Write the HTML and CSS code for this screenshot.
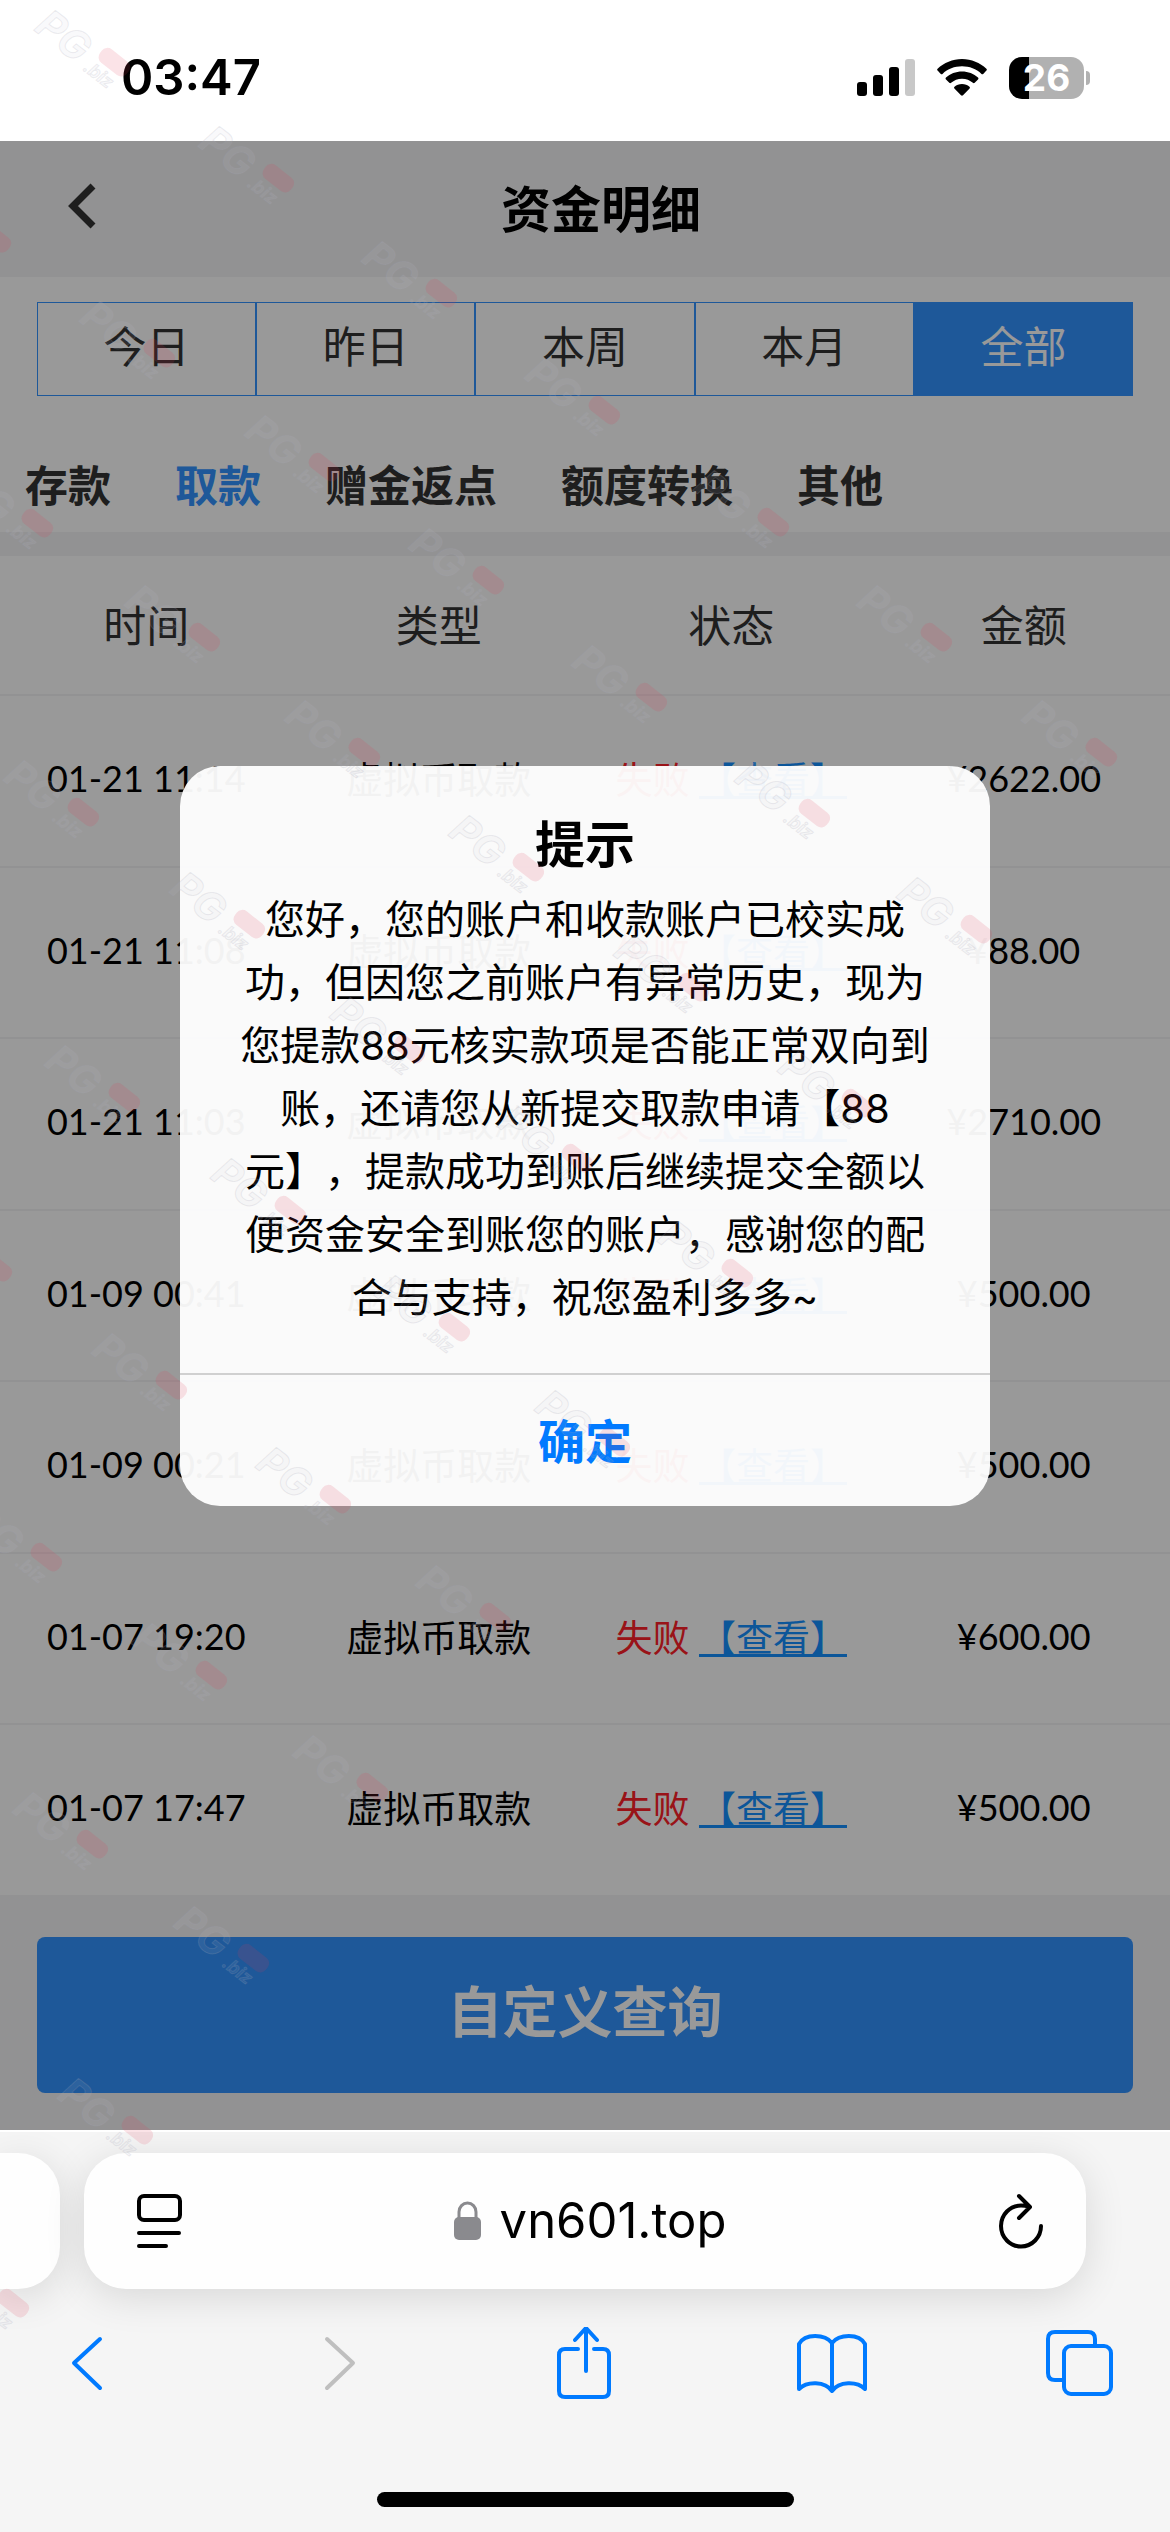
FILE: index.html
```html
<!DOCTYPE html>
<html lang="zh-CN">
<head>
<meta charset="utf-8">
<meta name="viewport" content="width=device-width, initial-scale=1">
<title>资金明细</title>
<link rel="stylesheet" href="styles.css">
</head>
<body>
<div class="screen">
  <div class="status-bar">
    <span class="clock">03:47</span>
    <div class="indicators">
      <svg width="58" height="38" viewBox="0 0 58 38" aria-label="信号">
        <rect x="0" y="23" width="10" height="14" rx="3"/>
        <rect x="16" y="16" width="10" height="21" rx="3"/>
        <rect x="32" y="8" width="10" height="29" rx="3"/>
        <rect x="48" y="0" width="10" height="37" rx="3" fill="#c8c8c8"/>
      </svg>
      <svg width="50" height="38" viewBox="0 0 50 38" aria-label="无线网络">
        <path d="M25 0C34.500 0 43 3.800 49.400 9.700c.6.600.6 1.300 0 1.900L46.200 14.900c-.5.500-1.200.5-1.700 0C39.300 10 32.500 7.300 25 7.300S10.700 10 5.500 14.900c-.5.500-1.200.5-1.700 0L.6 11.600c-.6-.6-.6-1.300 0-1.900C7 3.800 15.500 0 25 0Z"/>
        <path d="M25 12.500c6.200 0 11.800 2.300 16 6.100.6.600.6 1.300 0 1.900l-3.300 3.300c-.5.500-1.200.5-1.800 0C33 21.300 29.200 19.700 25 19.700S17 21.300 14.100 23.800c-.6.500-1.300.5-1.800 0L9 20.500c-.6-.6-.6-1.300 0-1.900 4.200-3.800 9.800-6.100 16-6.100Z"/>
        <path d="M25 25c2.900 0 5.500 1 7.500 2.700.6.500.6 1.200.1 1.800L26 36.300c-.6.600-1.400.6-2 0l-6.600-6.800c-.5-.6-.5-1.300.1-1.800C19.500 26 22.100 25 25 25Z"/>
      </svg>
      <div class="battery"><span class="battery-level">26</span></div>
    </div>
  </div>

  <main class="page">
    <header class="page-header">
      <button class="header-back" type="button" aria-label="返回">
        <svg width="30" height="46" viewBox="0 0 30 46"><path d="M25 3 5 23 25 43" fill="none" stroke="#333" stroke-width="7"/></svg>
      </button>
      <h1>资金明细</h1>
    </header>

    <section class="filters">
      <div class="ranges">
        <button type="button">今日</button>
        <button type="button">昨日</button>
        <button type="button">本周</button>
        <button type="button">本月</button>
        <button type="button" class="active">全部</button>
      </div>
      <nav class="kinds">
        <a href="#deposit">存款</a>
        <a href="#withdraw" class="active">取款</a>
        <a href="#bonus">赠金返点</a>
        <a href="#transfer">额度转换</a>
        <a href="#other">其他</a>
      </nav>
    </section>

    <table class="records">
      <thead>
        <tr><th>时间</th><th>类型</th><th>状态</th><th>金额</th></tr>
      </thead>
      <tbody>
        <tr><td>01-21 11:14</td><td class="type">虚拟币取款</td><td class="state"><span class="failed">失败</span> <a href="#r1">【查看】</a></td><td>¥2622.00</td></tr>
        <tr><td>01-21 11:08</td><td class="type">虚拟币取款</td><td class="state"><span class="failed">失败</span> <a href="#r2">【查看】</a></td><td>¥88.00</td></tr>
        <tr><td>01-21 11:03</td><td class="type">虚拟币取款</td><td class="state"><span class="failed">失败</span> <a href="#r3">【查看】</a></td><td>¥2710.00</td></tr>
        <tr><td>01-09 00:41</td><td class="type">虚拟币取款</td><td class="state"><span class="failed">失败</span> <a href="#r4">【查看】</a></td><td>¥500.00</td></tr>
        <tr><td>01-09 00:21</td><td class="type">虚拟币取款</td><td class="state"><span class="failed">失败</span> <a href="#r5">【查看】</a></td><td>¥500.00</td></tr>
        <tr><td>01-07 19:20</td><td class="type">虚拟币取款</td><td class="state"><span class="failed">失败</span> <a href="#r6">【查看】</a></td><td>¥600.00</td></tr>
        <tr><td>01-07 17:47</td><td class="type">虚拟币取款</td><td class="state"><span class="failed">失败</span> <a href="#r7">【查看】</a></td><td>¥500.00</td></tr>
      </tbody>
    </table>

    <div class="query"><button type="button">自定义查询</button></div>

    <div class="backdrop">
      <div class="dialog" role="alertdialog" aria-labelledby="dialog-title" aria-describedby="dialog-text">
        <div class="dialog-body">
          <h2 id="dialog-title">提示</h2>
          <p id="dialog-text">您好，您的账户和收款账户已校实成功，但因您之前账户有异常历史，现为您提款88元核实款项是否能正常双向到账，还请您从新提交取款申请【88元】，提款成功到账后继续提交全额以便资金安全到账您的账户，感谢您的配合与支持，祝您盈利多多~</p>
        </div>
        <button type="button" class="dialog-ok">确定</button>
      </div>
    </div>
  </main>

  <footer class="browser-bar">
    <div class="tab-strip">
      <div class="previous-tab"></div>
      <div class="address">
        <button type="button" aria-label="页面菜单">
          <svg width="46" height="54" viewBox="0 0 46 54" fill="none" stroke="#000" stroke-width="4" stroke-linecap="round">
            <rect x="3" y="2" width="41" height="24" rx="5"/>
            <path d="M3 39H43M3 52H30"/>
          </svg>
        </button>
        <button type="button" class="site">
          <svg width="28" height="40" viewBox="0 0 28 40"><rect x="0" y="16" width="27" height="23" rx="5" fill="#8a8a8e"/><path d="M5 18V11a8.500 9 0 0 1 17 0v7" fill="none" stroke="#8a8a8e" stroke-width="3"/></svg>
          <span>vn601.top</span>
        </button>
        <button type="button" aria-label="刷新">
          <svg width="46" height="56" viewBox="0 0 46 56" fill="none" stroke="#000" stroke-width="4" stroke-linecap="round" stroke-linejoin="round">
            <path d="M43 33a20 20.500 0 1 1-20-20.500q4 0 8 1M21 3 32 14 21 25"/>
          </svg>
        </button>
      </div>
    </div>
    <div class="toolbar">
      <button type="button" aria-label="后退">
        <svg width="72" height="72" viewBox="0 0 72 72"><path d="M49 12 23 36 49 61"/></svg>
      </button>
      <button type="button" aria-label="前进" disabled>
        <svg width="72" height="72" viewBox="0 0 72 72"><path d="M28 12 54 36 28 61"/></svg>
      </button>
      <button type="button" aria-label="分享">
        <svg width="72" height="72" viewBox="0 0 72 72"><path d="M30 22H17q-6 0-6 6v36q0 6 6 6h38q6 0 6-6V28q0-6-6-6H46M38 44V3M27 13 38 1 49 13"/></svg>
      </button>
      <button type="button" aria-label="书签">
        <svg width="72" height="72" viewBox="0 0 72 72"><path d="M36 16C29 7 9 6 3 17V62C11 54 29 54 36 64C43 54 61 54 69 62V17C63 6 43 7 36 16V64"/></svg>
      </button>
      <button type="button" aria-label="标签页">
        <svg width="72" height="72" viewBox="0 0 72 72"><rect x="20" y="19" width="47" height="48" rx="7"/><path d="M51 18V12q0-7-7-7H11q-7 0-7 7V46q0 7 7 7H19"/></svg>
      </button>
    </div>
    <div class="home-indicator"></div>
  </footer>

  <svg class="watermarks" aria-hidden="true">
    <defs>
      <g id="stamp" transform="rotate(38)">
        <text class="stamp-name" x="11" y="14">PG</text>
        <text class="stamp-zone" x="74" y="15">.biz</text>
        <rect class="stamp-pill" x="78" y="-19" width="34" height="17" rx="7"/>
      </g>
    </defs>
    <use href="#stamp" x="33" y="12"/><use href="#stamp" x="197" y="128"/><use href="#stamp" x="360" y="243"/><use href="#stamp" x="523" y="360"/>
    <use href="#stamp" x="-86" y="188"/><use href="#stamp" x="78" y="303"/><use href="#stamp" x="243" y="417"/><use href="#stamp" x="407" y="530"/>
    <use href="#stamp" x="570" y="647"/><use href="#stamp" x="733" y="763"/><use href="#stamp" x="895" y="879"/><use href="#stamp" x="692" y="472"/>
    <use href="#stamp" x="855" y="587"/><use href="#stamp" x="1020" y="702"/><use href="#stamp" x="-44" y="473"/><use href="#stamp" x="123" y="587"/>
    <use href="#stamp" x="283" y="702"/><use href="#stamp" x="447" y="817"/><use href="#stamp" x="612" y="937"/><use href="#stamp" x="776" y="1053"/>
    <use href="#stamp" x="2" y="762"/><use href="#stamp" x="168" y="874"/><use href="#stamp" x="328" y="999"/><use href="#stamp" x="496" y="1108"/>
    <use href="#stamp" x="656" y="1223"/><use href="#stamp" x="43" y="1047"/><use href="#stamp" x="209" y="1160"/><use href="#stamp" x="373" y="1277"/>
    <use href="#stamp" x="533" y="1392"/><use href="#stamp" x="-85" y="1217"/><use href="#stamp" x="90" y="1335"/><use href="#stamp" x="254" y="1449"/>
    <use href="#stamp" x="414" y="1567"/><use href="#stamp" x="-35" y="1507"/><use href="#stamp" x="130" y="1625"/><use href="#stamp" x="291" y="1737"/>
    <use href="#stamp" x="11" y="1794"/><use href="#stamp" x="172" y="1908"/><use href="#stamp" x="56" y="2080"/><use href="#stamp" x="-68" y="2253"/>
  </svg>
</div>
</body>
</html>
```

FILE: styles.css
```css
* {
  box-sizing: border-box;
}

body {
  margin: 0;
  font-family: Lato, "Noto Sans CJK SC", sans-serif;
  color: #333;
  background: #f5f5f5;
}

button {
  padding: 0;
  border: 0;
  background: none;
  color: inherit;
  font: inherit;
}

svg {
  display: block;
  flex: none;
}

h1,
h2,
p {
  margin: 0;
}

.screen {
  position: relative;
  overflow: hidden;
}

/* Phone status bar */
.status-bar {
  display: flex;
  justify-content: space-between;
  align-items: center;
  height: 141px;
  padding: 14px 80px 0 121px;
  background: #fff;
}

.clock {
  color: #000;
  font: 600 49px/60px Inter, sans-serif;
}

.indicators {
  display: flex;
  align-items: center;
  gap: 22px;
}

.battery {
  display: flex;
  align-items: center;
  gap: 2px;
}

.battery-level {
  width: 75px;
  border-radius: 13px;
  background: linear-gradient(90deg, #000 20px, #b1b1b1 20px);
  color: #fff;
  font: 700 37px/42px Inter, sans-serif;
  text-align: center;
}

.battery::after {
  content: "";
  width: 4px;
  height: 14px;
  border-radius: 0 4px 4px 0;
  background: #b1b1b1;
}

/* Page */
.page {
  position: relative;
  background: #f4f4f5;
}

.page-header {
  display: grid;
  grid-template-columns: 98px 1fr 66px;
  align-items: center;
  height: 136px;
}

.page-header h1 {
  color: #000;
  font-size: 50px;
  font-weight: 700;
  line-height: 64px;
  text-align: center;
}

.header-back {
  justify-self: end;
  padding-bottom: 6px;
}

.filters {
  padding: 25px 0 0;
  background: #fff;
}

.ranges {
  display: flex;
  margin: 0 37px;
}

.ranges button {
  flex: 1;
  height: 94px;
  padding-bottom: 4px;
  border: 1px solid #3293ff;
  font-size: 43px;
  line-height: 60px;
}

.ranges .active {
  background: #3293ff;
  color: #fff;
}

.kinds {
  display: flex;
  gap: 64px;
  padding: 58px 25px 14px;
  font-size: 43px;
  font-weight: 700;
  line-height: 64px;
}

.kinds a {
  color: #333;
  text-decoration: none;
}

.kinds .active {
  color: #3293ff;
}

.records {
  width: 100%;
  margin-top: 24px;
  border-collapse: collapse;
  table-layout: fixed;
  background: #fff;
  text-align: center;
}

.records tr {
  border-bottom: 2px solid #f4f4f5;
}

.records th {
  height: 139px;
  padding: 0 0 4px;
  font-size: 43px;
  font-weight: 400;
}

.records td {
  height: 172px;
  padding: 0 0 6px;
  color: #000;
  font-size: 36px;
  white-space: nowrap;
}

.records tr:nth-child(even) td {
  height: 171px;
}

.records .type,
.records .state {
  font-size: 37px;
}

.records .failed {
  color: #ff2028;
}

.records a {
  color: #1490ff;
  text-decoration-thickness: 3px;
}

.query {
  padding: 40px 37px 37px;
}

.query button {
  display: block;
  width: 100%;
  height: 156px;
  padding-bottom: 14px;
  border-radius: 8px;
  background: #3293ff;
  color: #fff;
  font-size: 55px;
  font-weight: 700;
}

/* Alert */
.backdrop {
  position: absolute;
  inset: 0;
  display: flex;
  justify-content: center;
  align-items: center;
  background: rgba(0, 0, 0, 0.4);
}

.dialog {
  width: 810px;
  max-width: 90%;
  border-radius: 40px;
  background: rgba(255, 255, 255, 0.95);
  color: #000;
  text-align: center;
}

.dialog-body {
  padding: 42px 54px 36px;
  border-bottom: 2px solid #d0d0d0;
}

.dialog h2 {
  font-size: 50px;
  font-weight: 700;
  line-height: 72px;
}

.dialog p {
  padding: 8px 0;
  font-family: Inter, "Noto Sans CJK SC", sans-serif;
  font-size: 40px;
  line-height: 63px;
  text-spacing-trim: space-all;
}

.dialog-ok {
  width: 100%;
  height: 131px;
  padding-bottom: 4px;
  color: #007aff;
  font-size: 47px;
  font-weight: 700;
}

/* Browser chrome */
.browser-bar {
  overflow: hidden;
  border-top: 2px solid #fff;
  background: #f5f5f5;
}

.tab-strip {
  display: flex;
  gap: 24px;
  padding: 21px 84px 38px 0;
}

.previous-tab {
  width: 60px;
  border-radius: 0 42px 42px 0;
  background: #fefefe;
  box-shadow: 0 8px 40px rgba(0, 0, 0, 0.12);
}

.address {
  flex: 1;
  display: flex;
  justify-content: space-between;
  align-items: center;
  height: 136px;
  padding: 0 42px 0 52px;
  border-radius: 42px;
  background: #fefefe;
  box-shadow: 0 8px 40px rgba(0, 0, 0, 0.12);
}

.site {
  display: flex;
  align-items: center;
  gap: 18px;
  color: #000;
  font: 400 49px/60px Inter, sans-serif;
}

.toolbar {
  display: flex;
  justify-content: space-between;
  padding: 0 54px 0 51px;
}

.toolbar svg {
  fill: none;
  stroke: #007aff;
  stroke-width: 4;
  stroke-linecap: round;
  stroke-linejoin: round;
}

.toolbar button:disabled svg {
  stroke: #bfbfbf;
}

.home-indicator {
  width: 417px;
  height: 15px;
  margin: 93px auto 23px;
  border-radius: 8px;
  background: #000;
}

/* Watermark layer */
.watermarks {
  position: absolute;
  inset: 0;
  width: 100%;
  height: 100%;
  pointer-events: none;
}

.stamp-name,
.stamp-zone {
  fill: rgba(200, 200, 215, 0.1);
  stroke: rgba(165, 165, 180, 0.2);
  font: italic 700 40px Inter, sans-serif;
}

.stamp-zone {
  font-size: 18px;
}

.stamp-pill {
  fill: rgba(230, 60, 85, 0.14);
}
```
